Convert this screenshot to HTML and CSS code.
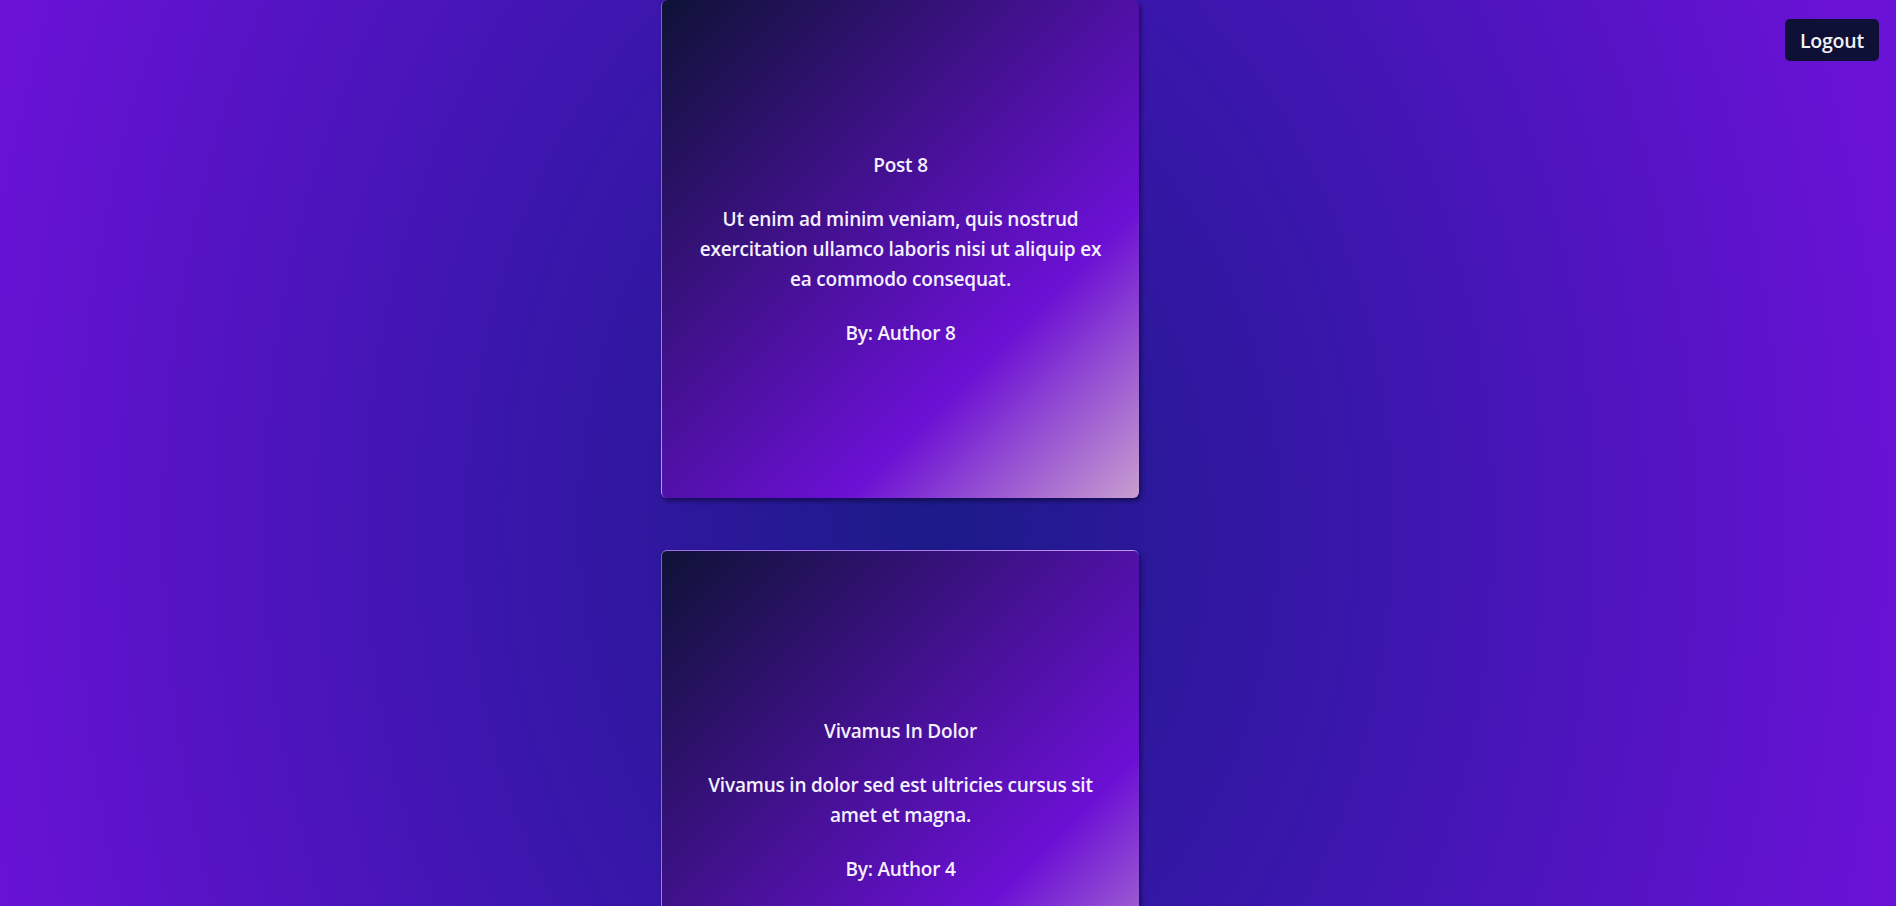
FILE: index.html
```html
<!DOCTYPE html>
<html lang="en">
<head>
<meta charset="utf-8">
<title>Posts</title>
<link rel="stylesheet" href="styles.css">
</head>
<body>
  <button class="logout">Logout</button>
  <main class="feed">
    <article class="card">
      <p class="card-title">Post 8</p>
      <p class="card-body">Ut enim ad minim veniam, quis nostrud exercitation ullamco laboris nisi ut aliquip ex ea commodo consequat.</p>
      <p class="card-author">By: Author 8</p>
    </article>
    <article class="card card-bordered">
      <p class="card-title">Vivamus In Dolor</p>
      <p class="card-body">Vivamus in dolor sed est ultricies cursus sit amet et magna.</p>
      <p class="card-author">By: Author 4</p>
    </article>
  </main>
</body>
</html>
```
FILE: styles.css
```css
* { box-sizing: border-box; }

html, body {
  margin: 0;
  height: 100%;
}

body {
  overflow: hidden;
  font-family: "Segoe UI", "Open Sans", "Noto Sans", sans-serif;
  font-weight: 600;
  color: #f4f0ff;
  background: radial-gradient(ellipse 52% 150% at 49% 58%, #1c1a88 0%, #3a16ac 45%, #6a12d6 100%);
}

.logout {
  position: fixed;
  top: 19px;
  right: 17px;
  height: 42px;
  padding: 0 15px;
  border: none;
  border-radius: 5px;
  background: #0e1036;
  color: #f2f2f8;
  font-family: inherit;
  font-weight: 600;
  font-size: 19.5px;
  letter-spacing: -0.2px;
  cursor: pointer;
}

.feed {
  display: flex;
  flex-direction: column;
  gap: 52px;
  width: 478px;
  margin-left: 661px;
}

.card {
  height: 498px;
  display: flex;
  flex-direction: column;
  justify-content: center;
  align-items: center;
  gap: 24px;
  padding: 0 31px;
  text-align: center;
  border-radius: 6px;
  border-left: 1px solid rgba(190, 150, 255, 0.55);
  background: linear-gradient(135deg, #0e1236 0%, #6b10d4 70%, #c99fd0 100%);
  box-shadow: 2px 3px 4px rgba(10, 5, 40, 0.55);
}

.card-bordered {
  border-top: 1px solid rgba(190, 150, 255, 0.7);
}

.card p {
  margin: 0;
  font-size: 19px;
  line-height: 30px;
  letter-spacing: -0.2px;
}
```
